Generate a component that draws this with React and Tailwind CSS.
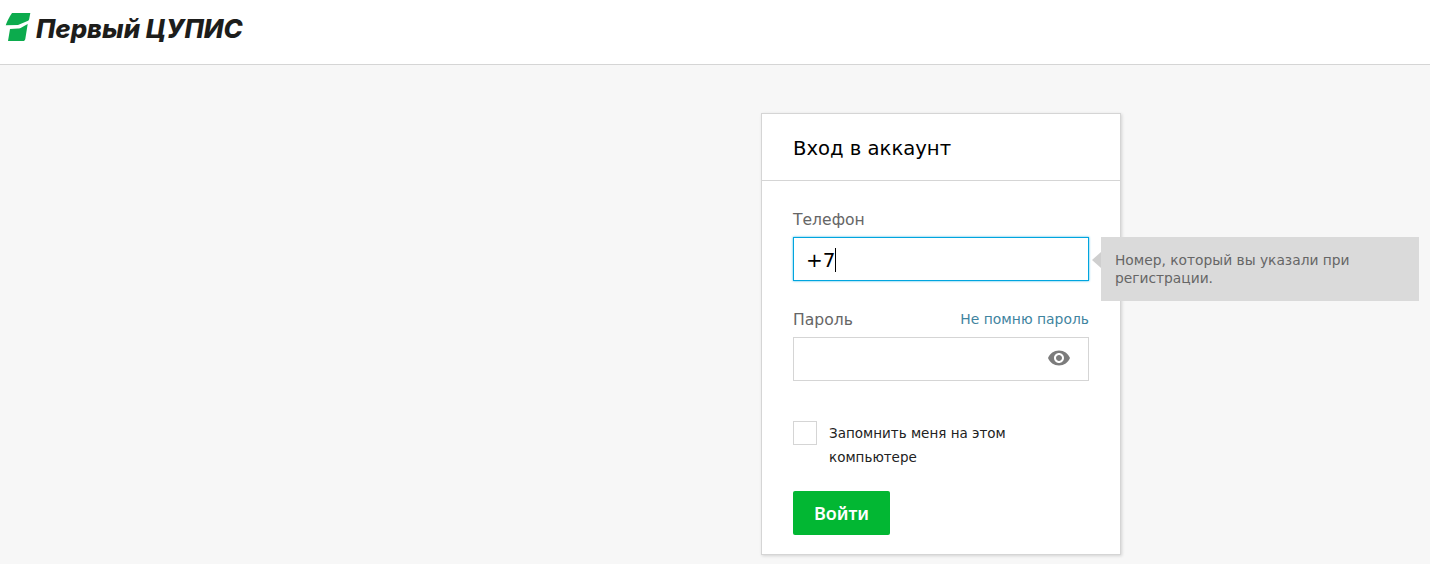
export default function App() {
  return (
    <div className="h-[564px] overflow-hidden bg-[#f7f7f7] font-['DejaVu_Sans',sans-serif]">
      <header className="h-[65px] bg-white border-b border-[#d5d5d5] flex items-start pl-[5px] pt-[12px]">
        <svg width="26" height="30" viewBox="0 0 26 30" className="shrink-0">
          <path d="M7 1 L25.3 1 L24.2 7 C24 8 23.4 8.6 22.5 9 L13 13 L0.7 13.3 C2.5 8.5 4.5 4.5 7 1 Z" fill="#0cab4d" />
          <path d="M22.7 12 L20.3 27 C20 28.4 19.2 29 18 29 L3 29 L5 17 L13 16.5 C14.5 16.4 15.5 16 16.5 15.4 Z" fill="#0cab4d" />
        </svg>
        <span className="ml-[5px] text-[25.8px] leading-[34px] font-extrabold italic text-[#1d1d1b] font-['Inter',sans-serif] whitespace-nowrap">Первый ЦУПИС</span>
      </header>
      <main className="pt-[48px] pl-[761px]">
        <div className="relative w-[360px] h-[442px] bg-white border border-[#d5d5d5] shadow-[1px_1px_3px_rgba(0,0,0,0.15)]">
          <div className="h-[67px] border-b border-[#d5d5d5] pl-[31px] pt-[21px] text-[19.6px] leading-[28px] text-black">Вход в аккаунт</div>
          <div className="px-[31px] pt-[28px]">
            <label className="block text-[15.6px] leading-[22px] text-[#666]">Телефон</label>
            <div className="relative mt-[6px] h-[44px] w-[296px] border border-[#00a5df] shadow-[0_0_2px_rgba(0,165,223,0.8)] flex items-center pl-[12px] pt-[2px] text-[20px] text-black">
              <span>+7</span><span className="w-px h-[24px] bg-black"></span>
            </div>
            <div className="flex items-start justify-between mt-[28px] w-[296px] h-[21px]">
              <label className="text-[15.6px] leading-[22px] text-[#666]">Пароль</label>
              <a className="text-[13.9px] leading-[20px] text-[#3f84a0]">Не помню пароль</a>
            </div>
            <div className="relative mt-[7px] h-[44px] w-[296px] border border-[#d5d5d5] flex items-center justify-end pr-[17px]">
              <svg width="24" height="24" viewBox="0 0 24 24" fill="#7c7c7c" className="mt-[-3px]">
                <path d="M12 4.5C7 4.5 2.73 7.61 1 12c1.73 4.39 6 7.5 11 7.5s9.27-3.11 11-7.5c-1.73-4.39-6-7.5-11-7.5zM12 17c-2.76 0-5-2.24-5-5s2.24-5 5-5 5 2.24 5 5-2.24 5-5 5zm0-8c-1.66 0-3 1.34-3 3s1.34 3 3 3 3-1.34 3-3-1.34-3-3-3z" />
              </svg>
            </div>
            <div className="flex items-start mt-[40px]">
              <div className="w-[24px] h-[24px] shrink-0 border border-[#d5d5d5] bg-white"></div>
              <span className="ml-[12px] w-[220px] text-[13.5px] leading-[24px] text-[#222]">Запомнить меня на этом компьютере</span>
            </div>
            <button className="block mt-[22px] w-[97px] h-[44px] rounded-[2px] bg-[#02b733] text-white text-[18px] font-semibold font-['Noto_Sans',sans-serif]">Войти</button>
          </div>
          <div className="absolute left-[339px] top-[123px] w-[318px] h-[64px] bg-[#dadada] pl-[14px] pt-[14px] text-[13.8px] leading-[18px] text-[#666]">
            <span className="absolute left-[-9px] top-[15px] w-0 h-0 border-y-[8px] border-y-transparent border-r-[9px] border-r-[#cfcfcf]"></span>
            Номер, который вы указали при регистрации.
          </div>
        </div>
      </main>
    </div>
  );
}
